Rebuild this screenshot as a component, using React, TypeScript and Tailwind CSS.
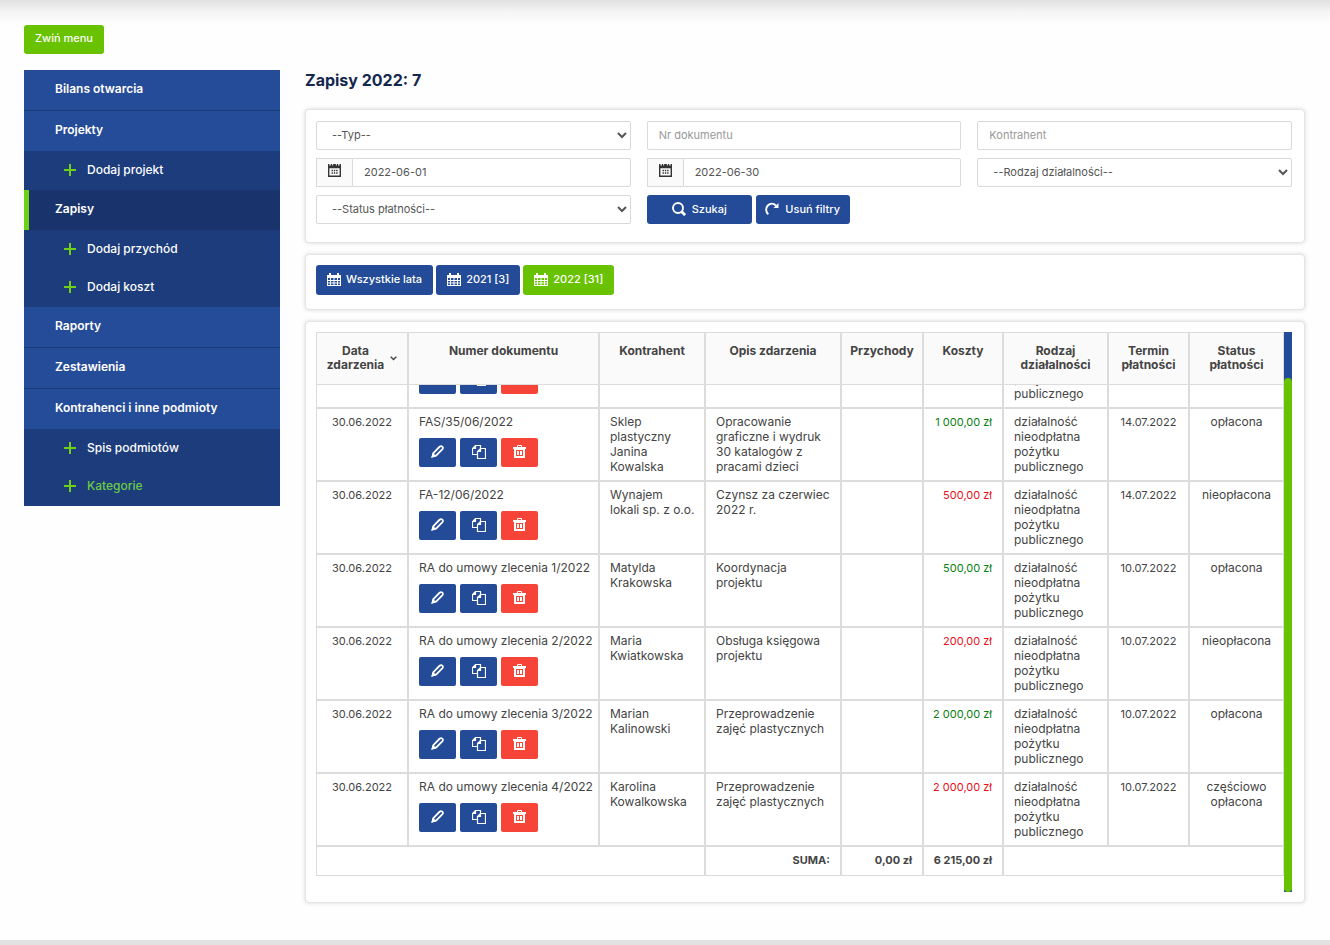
import { useLayoutEffect, useRef, useState } from "react";
import type { ReactNode } from "react";

type IconProps = { className?: string };

function PlusIcon({ className }: IconProps) {
  return (
    <svg viewBox="0 0 12 12" className={className} fill="currentColor" aria-hidden="true">
      <path d="M5 0h2v5h5v2H7v5H5V7H0V5h5z" />
    </svg>
  );
}

function DateIcon({ className }: IconProps) {
  return (
    <svg viewBox="0 0 14 14" className={className} fill="currentColor" aria-hidden="true">
      <path
        fillRule="evenodd"
        d="M0 0h1.500v1.500H3V0h1.500v1.500h1V0h3v1.500h1V0H11v1.500h1.500V0H14v14H0zM1.500 4.500v8h11v-8z"
      />
      <path d="M3.800 6.300h1.500v1.500H3.800zM6.300 6.300h1.500v1.500H6.300zM8.800 6.300h1.500v1.500H8.800zM3.800 9h1.500v1.500H3.800zM6.300 9h1.500v1.500H6.300zM8.800 9h1.500v1.500H8.800z" />
    </svg>
  );
}

function GridCalendarIcon({ className }: IconProps) {
  return (
    <svg viewBox="0 0 14 13" className={className} fill="currentColor" aria-hidden="true">
      <path
        fillRule="evenodd"
        d="M0 2h2V0h2v2h6V0h2v2h2v11H0zM1 5v2h2V5zM4 5v2h2.500V5zM7.500 5v2H10V5zM11 5v2h2V5zM1 8v1.500h2V8zM4 8v1.500h2.500V8zM7.500 8v1.500H10V8zM11 8v1.500h2V8zM1 10.500V12h2v-1.500zM4 10.500V12h2.500v-1.500zM7.500 10.500V12H10v-1.500zM11 10.500V12h2v-1.500z"
      />
    </svg>
  );
}

function SearchIcon({ className }: IconProps) {
  return (
    <svg viewBox="0 0 14 14" className={className} fill="none" stroke="currentColor" aria-hidden="true">
      <circle cx="6" cy="6" r="5" strokeWidth="1.900" />
      <path d="M9.500 9.500l3.600 3.600" strokeWidth="2.800" />
    </svg>
  );
}

function ResetIcon({ className }: IconProps) {
  return (
    <svg viewBox="0 0 14 14" className={className} fill="none" stroke="currentColor" aria-hidden="true">
      <path d="M3.300 12.300C.6 9.800.4 6 2.800 3.500 5.200 1.200 8.500 1.200 11 3.600" strokeWidth="1.900" />
      <path d="M13.500 1v5H8.500z" fill="currentColor" stroke="none" />
    </svg>
  );
}

function PencilIcon({ className }: IconProps) {
  return (
    <svg viewBox="0 0 14 14" className={className} fill="none" stroke="currentColor" aria-hidden="true">
      <path d="M2.800 8.500L9.200 1.900Q10.800.5 12.200 1.800T12.100 4.700L5.700 11.200L1.700 12.400z" strokeWidth="1.900" />
      <path d="M0.300 13.700L1.800 8.200l4 3.900z" fill="currentColor" stroke="none" />
    </svg>
  );
}

function CopyIcon({ className }: IconProps) {
  return (
    <svg viewBox="0 0 14 14" className={className} fill="none" stroke="currentColor" aria-hidden="true">
      <path d="M5.500 9.500h-5v-6l3-3h5v3M.5 3.500h3v-3" strokeWidth="1.200" />
      <path d="M5.500 6.500l3-3h5v10h-8zM5.500 6.500h3v-3" strokeWidth="1.200" />
    </svg>
  );
}

function TrashIcon({ className }: IconProps) {
  return (
    <svg viewBox="0 0 13 13" className={className} fill="currentColor" aria-hidden="true">
      <path
        fillRule="evenodd"
        d="M4 2V1q0-1 1-1h3q1 0 1 1v1h4v2h-1v9H1V4H0V2zM5 1v1h3V1zM3 5v6h7V5z"
      />
      <path d="M4 6h2v4H4zM7 6h2v4H7z" />
    </svg>
  );
}

function MenuItem({ label, divided, active }: { label: string; divided?: boolean; active?: boolean }) {
  return (
    <a
      href="#"
      className={
        "flex pb-0.5 text-xs font-semibold text-white " +
        (divided ? "border-t border-[#1b3a78] " : "") +
        (active ? "border-l-5 border-[#70d016] bg-[#19346c] pl-[26px]" : "bg-[#254c98] pl-[31px]")
      }
    >
      <span className="leading-[38px]">{label}</span>
    </a>
  );
}

function SubMenu({ items, current }: { items: string[]; current?: string }) {
  return (
    <ul className="bg-[#1c3c7c] pt-px">
      {items.map((item) => (
        <li key={item}>
          <a
            href="#"
            className={
              "flex h-[38px] items-center gap-[11px] pb-0.5 pl-10 text-xs font-medium " +
              (item === current ? "text-[#6ccb46]" : "text-white")
            }
          >
            <PlusIcon className="size-3 text-[#70d016]" />
            {item}
          </a>
        </li>
      ))}
    </ul>
  );
}

const field =
  "h-[29px] w-full min-w-0 rounded-[2px] border border-[#d9d9d9] bg-white pb-0.5 text-[11px] text-[#555] placeholder:text-[#999]";

function Dropdown({ label }: { label: string }) {
  return (
    <select aria-label={label} className={field + " pl-[11px]"}>
      <option>{`--${label}--`}</option>
    </select>
  );
}

function DateField({ label, value }: { label: string; value: string }) {
  return (
    <label className="flex">
      <span className="flex w-9 shrink-0 justify-center border border-r-0 border-[#d9d9d9] bg-[#fafafa] pt-[5px]">
        <DateIcon className="size-[13px] text-[#333]" />
      </span>
      <input aria-label={label} defaultValue={value} className={field + " rounded-l-none px-[11px]"} />
    </label>
  );
}

function Card({ className, children }: { className: string; children: ReactNode }) {
  return (
    <section className={"rounded border border-[#e4e4e4] bg-white shadow-[0_0_4px_rgba(0,0,0,0.15)] " + className}>
      {children}
    </section>
  );
}

type Entry = {
  date: string;
  doc: string;
  party: string;
  desc: string;
  cost: string;
  paid: boolean;
  due: string;
  status: string;
};

const entries: Entry[] = [
  { date: "", doc: "", party: "", desc: "", cost: "", paid: true, due: "", status: "" },
  {
    date: "30.06.2022",
    doc: "FAS/35/06/2022",
    party: "Sklep plastyczny Janina Kowalska",
    desc: "Opracowanie graficzne i wydruk 30 katalogów z pracami dzieci",
    cost: "1 000,00 zł",
    paid: true,
    due: "14.07.2022",
    status: "opłacona",
  },
  {
    date: "30.06.2022",
    doc: "FA-12/06/2022",
    party: "Wynajem lokali\u00a0sp.\u00a0z\u00a0o.o.",
    desc: "Czynsz za czerwiec 2022 r.",
    cost: "500,00 zł",
    paid: false,
    due: "14.07.2022",
    status: "nieopłacona",
  },
  {
    date: "30.06.2022",
    doc: "RA do umowy zlecenia 1/2022",
    party: "Matylda Krakowska",
    desc: "Koordynacja projektu",
    cost: "500,00 zł",
    paid: true,
    due: "10.07.2022",
    status: "opłacona",
  },
  {
    date: "30.06.2022",
    doc: "RA do umowy zlecenia 2/2022",
    party: "Maria Kwiatkowska",
    desc: "Obsługa księgowa projektu",
    cost: "200,00 zł",
    paid: false,
    due: "10.07.2022",
    status: "nieopłacona",
  },
  {
    date: "30.06.2022",
    doc: "RA do umowy zlecenia 3/2022",
    party: "Marian Kalinowski",
    desc: "Przeprowadzenie zajęć plastycznych",
    cost: "2 000,00 zł",
    paid: true,
    due: "10.07.2022",
    status: "opłacona",
  },
  {
    date: "30.06.2022",
    doc: "RA do umowy zlecenia 4/2022",
    party: "Karolina Kowalkowska",
    desc: "Przeprowadzenie zajęć plastycznych",
    cost: "2 000,00 zł",
    paid: false,
    due: "10.07.2022",
    status: "częściowo opłacona",
  },
];

const actions = [
  { label: "Edytuj", color: "bg-[#234b97]", icon: <PencilIcon className="size-[13px]" /> },
  { label: "Kopiuj", color: "bg-[#234b97]", icon: <CopyIcon className="size-[14px]" /> },
  { label: "Usuń", color: "bg-[#f64438]", icon: <TrashIcon className="size-[13px]" /> },
];

const th = "h-[53px] border border-[#dcdcdc] bg-[#fafafa] px-1 pt-[11px] align-top font-bold leading-[14px]";
const td = "border border-[#dcdcdc] px-[10px] pt-[5px] pb-[6px] align-top";
const figure = " text-[11px] leading-[17px] whitespace-nowrap";

function EntriesTable() {
  return (
    <table className="w-full table-fixed border-separate border-spacing-0 text-[12px] leading-[15px] text-[#444]">
      <colgroup>
        <col className="w-[92px]" />
        <col className="w-[191px]" />
        <col className="w-[106px]" />
        <col className="w-[136px]" />
        <col className="w-[82px]" />
        <col className="w-[80px]" />
        <col className="w-[105px]" />
        <col className="w-[81px]" />
        <col className="w-[95px]" />
      </colgroup>
      <thead className="sticky top-0 z-10">
        <tr>
          <th className={th}>
            <span className="flex items-center justify-center gap-1.5">
              <span>
                Data
                <br />
                zdarzenia
              </span>
              <svg viewBox="0 0 7 5" className="h-[5px] w-[7px]" fill="none" stroke="currentColor" aria-hidden="true">
                <path d="M.7.8L3.500 3.600 6.300.8" strokeWidth="1.400" />
              </svg>
            </span>
          </th>
          <th className={th}>Numer dokumentu</th>
          <th className={th}>Kontrahent</th>
          <th className={th}>Opis zdarzenia</th>
          <th className={th}>Przychody</th>
          <th className={th}>Koszty</th>
          <th className={th}>Rodzaj działalności</th>
          <th className={th}>Termin płatności</th>
          <th className={th}>Status płatności</th>
        </tr>
      </thead>
      <tbody>
        {entries.map((e, i) => (
          <tr key={i}>
            <td className={td + " text-center" + figure}>{e.date}</td>
            <td className={td + " whitespace-nowrap"}>
              <div className="h-[15px]">{e.doc}</div>
              <div className="mt-[9px] flex gap-1">
                {actions.map((a) => (
                  <button
                    key={a.label}
                    aria-label={a.label}
                    className={"flex h-[29px] w-[37px] justify-center rounded-[2px] pt-[7px] text-white " + a.color}
                  >
                    {a.icon}
                  </button>
                ))}
              </div>
            </td>
            <td className={td}>{e.party}</td>
            <td className={td}>{e.desc}</td>
            <td className={td} />
            <td className={td + " pl-0 text-right" + figure + (e.paid ? " text-[#08800f]" : " text-[#e8101c]")}>
              {e.cost}
            </td>
            <td className={td}>działalność nieodpłatna pożytku publicznego</td>
            <td className={td + " text-center" + figure}>{e.due}</td>
            <td className={td + " text-center"}>{e.status}</td>
          </tr>
        ))}
      </tbody>
      <tfoot className="font-bold">
        <tr className="h-[30px]">
          <td className={td} colSpan={3} />
          <td className={td + " text-right" + figure}>SUMA:</td>
          <td className={td + " text-right" + figure}>0,00 zł</td>
          <td className={td + " pl-0 text-right" + figure}>6 215,00 zł</td>
          <td className={td} colSpan={3} />
        </tr>
      </tfoot>
    </table>
  );
}

function ScrollArea({ children }: { children: ReactNode }) {
  const box = useRef<HTMLDivElement>(null);
  const [thumb, setThumb] = useState({ top: 0, size: 100 });

  const update = () => {
    const el = box.current;
    if (!el) return;
    setThumb({
      top: (el.scrollTop / el.scrollHeight) * 100,
      size: (el.clientHeight / el.scrollHeight) * 100,
    });
  };

  useLayoutEffect(() => {
    const el = box.current;
    if (el) el.scrollTop = el.scrollHeight;
    update();
  }, []);

  return (
    <div className="flex h-[560px]">
      <div ref={box} onScroll={update} className="min-w-0 grow overflow-y-auto pb-4 [scrollbar-width:none]">
        {children}
      </div>
      <div className="flex w-2 shrink-0 flex-col bg-[#234b97]">
        <div className="shrink-0" style={{ height: `${thumb.top}%` }} />
        <div className="shrink-0 rounded bg-[#69c200]" style={{ height: `${thumb.size}%` }} />
      </div>
    </div>
  );
}

const button = "flex items-center justify-center rounded-[3px] text-[11px] font-medium text-white";

export default function App() {
  return (
    <div className="flex min-h-screen flex-col bg-[linear-gradient(#e0e0e0,#f5f5f5_12px,#fefefe_25px)] font-['Inter','Noto_Sans',sans-serif]">
      <div className="pt-[25px] pr-[25px] pb-9 pl-6">
        <button className={button + " h-[29px] bg-[#69c200] px-[11px] pb-0.5"}>Zwiń menu</button>
        <div className="mt-4 flex items-start gap-[25px]">
          <nav className="w-64 shrink-0">
            <MenuItem label="Bilans otwarcia" />
            <MenuItem label="Projekty" divided />
            <SubMenu items={["Dodaj projekt"]} />
            <MenuItem label="Zapisy" active />
            <SubMenu items={["Dodaj przychód", "Dodaj koszt"]} />
            <MenuItem label="Raporty" />
            <MenuItem label="Zestawienia" divided />
            <MenuItem label="Kontrahenci i inne podmioty" divided />
            <SubMenu items={["Spis podmiotów", "Kategorie"]} current="Kategorie" />
          </nav>

          <main className="flex min-w-0 grow flex-col gap-[11px]">
            <h1 className="mb-2 text-base leading-5 font-bold text-[#14284f]">Zapisy 2022: 7</h1>

            <Card className="grid grid-cols-3 gap-x-4 gap-y-2 pt-[11px] pr-3 pb-[18px] pl-[10px]">
              <Dropdown label="Typ" />
              <input aria-label="Nr dokumentu" placeholder="Nr dokumentu" className={field + " px-[11px]"} />
              <input aria-label="Kontrahent" placeholder="Kontrahent" className={field + " px-[11px]"} />
              <DateField label="Data od" value="2022-06-01" />
              <DateField label="Data do" value="2022-06-30" />
              <Dropdown label="Rodzaj działalności" />
              <Dropdown label="Status płatności" />
              <div className="flex gap-1">
                <button className={button + " h-[29px] w-[105px] gap-1.5 bg-[#234b97] pb-px"}>
                  <SearchIcon className="size-[14px]" />
                  Szukaj
                </button>
                <button className={button + " h-[29px] w-[94px] gap-1.5 bg-[#234b97] pb-px"}>
                  <ResetIcon className="size-[14px]" />
                  Usuń filtry
                </button>
              </div>
            </Card>

            <Card className="flex gap-[3px] px-[10px] pt-[10px] pb-[14px]">
              <button className={button + " h-[30px] gap-[5px] bg-[#234b97] px-[11px] pb-0.5"}>
                <GridCalendarIcon className="h-[13px] w-[14px]" />
                Wszystkie lata
              </button>
              <button className={button + " h-[30px] gap-[5px] bg-[#234b97] px-[11px] pb-0.5"}>
                <GridCalendarIcon className="h-[13px] w-[14px]" />
                2021 [3]
              </button>
              <button className={button + " h-[30px] gap-[5px] bg-[#69c200] px-[11px] pb-0.5"}>
                <GridCalendarIcon className="h-[13px] w-[14px]" />
                2022 [31]
              </button>
            </Card>

            <Card className="py-[10px] pr-3 pl-[10px]">
              <ScrollArea>
                <EntriesTable />
              </ScrollArea>
            </Card>
          </main>
        </div>
      </div>
      <footer className="mt-auto h-[5px] bg-[#e2e2e2]" />
    </div>
  );
}
